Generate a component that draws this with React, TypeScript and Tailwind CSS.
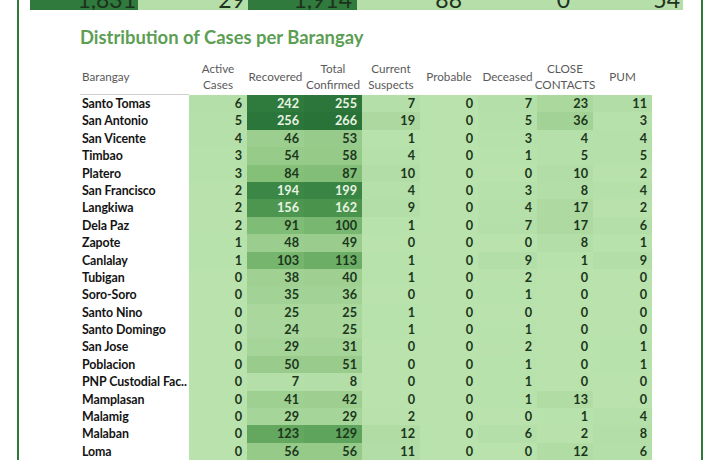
import React from "react";

type Row = [string, number, number, number, number, number, number, number, number];

const rows: Row[] = [
  ["Santo Tomas", 6, 242, 255, 7, 0, 7, 23, 11],
  ["San Antonio", 5, 256, 266, 19, 0, 5, 36, 3],
  ["San Vicente", 4, 46, 53, 1, 0, 3, 4, 4],
  ["Timbao", 3, 54, 58, 4, 0, 1, 5, 5],
  ["Platero", 3, 84, 87, 10, 0, 0, 10, 2],
  ["San Francisco", 2, 194, 199, 4, 0, 3, 8, 4],
  ["Langkiwa", 2, 156, 162, 9, 0, 4, 17, 2],
  ["Dela Paz", 2, 91, 100, 1, 0, 7, 17, 6],
  ["Zapote", 1, 48, 49, 0, 0, 0, 8, 1],
  ["Canlalay", 1, 103, 113, 1, 0, 9, 1, 9],
  ["Tubigan", 0, 38, 40, 1, 0, 2, 0, 0],
  ["Soro-Soro", 0, 35, 36, 0, 0, 1, 0, 0],
  ["Santo Nino", 0, 25, 25, 1, 0, 0, 0, 0],
  ["Santo Domingo", 0, 24, 25, 1, 0, 1, 0, 0],
  ["San Jose", 0, 29, 31, 0, 0, 2, 0, 1],
  ["Poblacion", 0, 50, 51, 0, 0, 1, 0, 1],
  ["PNP Custodial Fac..", 0, 7, 8, 0, 0, 1, 0, 0],
  ["Mamplasan", 0, 41, 42, 0, 0, 1, 13, 0],
  ["Malamig", 0, 29, 29, 2, 0, 0, 1, 4],
  ["Malaban", 0, 123, 129, 12, 0, 6, 2, 8],
  ["Loma", 0, 56, 56, 11, 0, 0, 12, 6],
];

const colW = [
  "w-[58px]",
  "w-[57px]",
  "w-[58px]",
  "w-[58px]",
  "w-[58px]",
  "w-[59px]",
  "w-[56px]",
  "w-[59px]",
];

const headers: string[][] = [
  ["Active", "Cases"],
  ["Recovered"],
  ["Total", "Confirmed"],
  ["Current", "Suspects"],
  ["Probable"],
  ["Deceased"],
  ["CLOSE", "CONTACTS"],
  ["PUM"],
];

const stops: [number, number[]][] = [
  [0, [185, 226, 173]],
  [0.15, [159, 208, 146]],
  [0.3, [136, 194, 124]],
  [0.4, [114, 179, 107]],
  [0.47, [98, 166, 94]],
  [0.6, [74, 148, 78]],
  [0.74, [58, 134, 68]],
  [1, [41, 115, 57]],
];

function heat(v: number): string {
  const t = Math.min(1, v / 266);
  for (let i = 0; i < stops.length - 1; i++) {
    const [a, ca] = stops[i];
    const [b, cb] = stops[i + 1];
    if (t >= a && t <= b) {
      const f = (t - a) / (b - a);
      const c = ca.map((x, k) => Math.round(x + (cb[k] - x) * f));
      return `rgb(${c[0]},${c[1]},${c[2]})`;
    }
  }
  return "rgb(41,115,57)";
}

export default function App() {
  return (
    <div className="w-[720px] h-[460px] overflow-hidden bg-white font-['Lato',sans-serif]">
      <div className="ml-[17px] w-[686px] h-full border-x-2 border-[#2d7a39]">
        {/* top summary bar (cut off at the top edge) */}
        <div className="ml-[11px] flex h-[10px] text-[23px] leading-[22px] text-[#1d321d]">
          <div className="w-[108px] h-full overflow-hidden bg-[#2f7a3c] flex justify-end pr-[2px]">
            <span className="-mt-[12px]">1,831</span>
          </div>
          <div className="w-[110px] h-full overflow-hidden bg-[#b5dea8] flex justify-end pr-[3px]">
            <span className="-mt-[12px]">29</span>
          </div>
          <div className="w-[109px] h-full overflow-hidden bg-[#2f7a3c] flex justify-end pr-[5px]">
            <span className="-mt-[12px]">1,914</span>
          </div>
          <div className="w-[111px] h-full overflow-hidden bg-[#b5dea8] flex justify-end pr-[6px]">
            <span className="-mt-[12px]">88</span>
          </div>
          <div className="w-[108px] h-full overflow-hidden bg-[#b5dea8] flex justify-end pr-[6px]">
            <span className="-mt-[12px]">0</span>
          </div>
          <div className="w-[107px] h-full overflow-hidden bg-[#b5dea8] flex justify-end pr-[3px]">
            <span className="-mt-[12px]">54</span>
          </div>
        </div>

        <div className="ml-[61px] mt-[16px] text-[18.4px] leading-[22px] font-bold text-[#5c9e54]">
          Distribution of Cases per Barangay
        </div>

        <div className="ml-[61px] mt-[12px]">
          {/* header */}
          <div className="flex h-[35px] text-[11.7px] leading-[16px] text-[#5a5a5a]">
            <div className="w-[109px] flex items-center pb-[3px] pl-[2px] border-b border-[#cfcfcf]">
              Barangay
            </div>
            {headers.map((h, i) => (
              <div
                key={i}
                className={`${colW[i]} flex flex-col items-center justify-center pb-[3px] text-center whitespace-nowrap`}
              >
                {h.map((l) => (
                  <span key={l}>{l}</span>
                ))}
              </div>
            ))}
          </div>
          {/* rows */}
          <div className="flex flex-col">
            {rows.map((r) => (
              <div key={r[0]} className="flex h-[17.4px] text-[12.7px] leading-[17.4px] font-bold">
                <div className="w-[109px] pl-[2px] text-[12.4px] tracking-[-0.1px] text-[#141414] whitespace-nowrap">
                  {r[0]}
                </div>
                {r.slice(1).map((v, i) => {
                  const n = v as number;
                  const light = n / 266 > 0.55;
                  return (
                    <div
                      key={i}
                      className={`${colW[i]} text-right pr-[5px] ${light ? "text-[#e8f4e2]" : "text-[#1c361c]"}`}
                      style={{ backgroundColor: heat(n) }}
                    >
                      {n}
                    </div>
                  );
                })}
              </div>
            ))}
          </div>
        </div>
      </div>
    </div>
  );
}
